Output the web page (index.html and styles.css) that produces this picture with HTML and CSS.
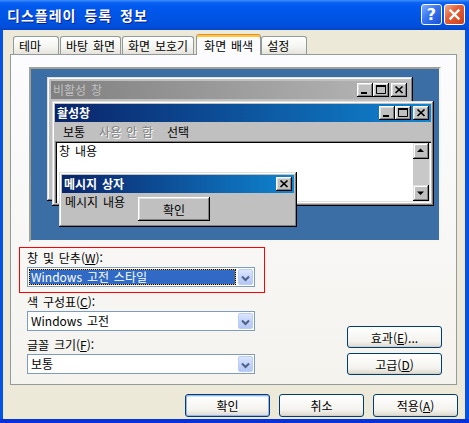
FILE: index.html
```html
<!DOCTYPE html>
<html lang="ko">
<head>
    <meta charset="UTF-8">
    <title>디스플레이 등록 정보</title>
    <link rel="stylesheet" href="styles.css">
</head>
<body>
    <div class="window">
        <div class="titlebar">
            <span class="title">디스플레이 등록 정보</span>
            <button class="cap help" type="button">?</button>
            <button class="cap close" type="button">
                <svg width="13" height="13" viewBox="0 0 13 13"><path d="M2.5 2.5l8 8M10.5 2.5l-8 8" stroke="#fff" stroke-width="2.4" stroke-linecap="square"/></svg>
            </button>
        </div>

        <div class="client">
            <ul class="tabs">
                <li class="tab">테마</li>
                <li class="tab">바탕 화면</li>
                <li class="tab">화면 보호기</li>
                <li class="tab selected">화면 배색</li>
                <li class="tab">설정</li>
            </ul>

            <div class="panel">
                <div class="preview">
                    <div class="desktop">
                        <!-- inactive window -->
                        <div class="cwin inactive">
                            <div class="ctitle">
                                <span class="ctitle-text">비활성 창</span>
                                <span class="cbtn"><svg width="16" height="14" viewBox="0 0 16 14"><rect x="4" y="9" width="6" height="2"/></svg></span>
                                <span class="cbtn"><svg width="16" height="14" viewBox="0 0 16 14"><path d="M3.5 2.5h9v8h-9z" fill="none" stroke="#000"/><rect x="3" y="2" width="10" height="2"/></svg></span>
                                <span class="cbtn gap"><svg width="16" height="14" viewBox="0 0 16 14"><path d="M4.5 3.5l7 6.5M11.5 3.5l-7 6.5" stroke="#000" stroke-width="1.7"/></svg></span>
                            </div>
                        </div>

                        <!-- active window -->
                        <div class="cwin active">
                            <div class="ctitle">
                                <span class="ctitle-text">활성창</span>
                                <span class="cbtn"><svg width="16" height="14" viewBox="0 0 16 14"><rect x="4" y="9" width="6" height="2"/></svg></span>
                                <span class="cbtn"><svg width="16" height="14" viewBox="0 0 16 14"><path d="M3.5 2.5h9v8h-9z" fill="none" stroke="#000"/><rect x="3" y="2" width="10" height="2"/></svg></span>
                                <span class="cbtn gap"><svg width="16" height="14" viewBox="0 0 16 14"><path d="M4.5 3.5l7 6.5M11.5 3.5l-7 6.5" stroke="#000" stroke-width="1.7"/></svg></span>
                            </div>
                            <div class="cmenu">
                                <span>보통</span>
                                <span class="disabled">사용 안 함</span>
                                <span>선택</span>
                            </div>
                            <div class="ctext">
                                <div class="ctext-body">창 내용</div>
                                <div class="scrollbar">
                                    <span class="sbtn"><svg width="16" height="16" viewBox="0 0 16 16"><path d="M4 9h7L7.5 5.5z"/></svg></span>
                                    <span class="track"></span>
                                    <span class="sbtn"><svg width="16" height="16" viewBox="0 0 16 16"><path d="M4 6.5h7L7.5 10z"/></svg></span>
                                </div>
                            </div>
                        </div>

                        <!-- message box -->
                        <div class="cwin msgbox">
                            <div class="ctitle">
                                <span class="ctitle-text">메시지 상자</span>
                                <span class="cbtn"><svg width="16" height="14" viewBox="0 0 16 14"><path d="M4.5 3.5l7 6.5M11.5 3.5l-7 6.5" stroke="#000" stroke-width="1.7"/></svg></span>
                            </div>
                            <div class="msg-body">
                                <span class="msg-text">메시지 내용</span>
                                <span class="classic-btn">확인</span>
                            </div>
                        </div>
                    </div>
                </div>

                <div class="options">
                    <div class="fields">
                        <div class="field focused">
                            <label>창 및 단추(<u>W</u>):</label>
                            <div class="combo">
                                <span class="combo-value selected-value">Windows 고전 스타일</span>
                                <span class="combo-arrow"><svg width="15" height="16" viewBox="0 0 15 16"><path d="M4 6.5l3.5 3.5L11 6.5" fill="none" stroke="#4D6185" stroke-width="2"/></svg></span>
                            </div>
                        </div>
                        <div class="field">
                            <label>색 구성표(<u>C</u>):</label>
                            <div class="combo">
                                <span class="combo-value">Windows 고전</span>
                                <span class="combo-arrow"><svg width="15" height="16" viewBox="0 0 15 16"><path d="M4 6.5l3.5 3.5L11 6.5" fill="none" stroke="#4D6185" stroke-width="2"/></svg></span>
                            </div>
                        </div>
                        <div class="field last">
                            <label>글꼴 크기(<u>F</u>):</label>
                            <div class="combo">
                                <span class="combo-value">보통</span>
                                <span class="combo-arrow"><svg width="15" height="16" viewBox="0 0 15 16"><path d="M4 6.5l3.5 3.5L11 6.5" fill="none" stroke="#4D6185" stroke-width="2"/></svg></span>
                            </div>
                        </div>
                    </div>
                    <div class="side-buttons">
                        <button class="btn side" type="button">효과(<u>E</u>)...</button>
                        <button class="btn side" type="button">고급(<u>D</u>)</button>
                    </div>
                </div>
            </div>

            <div class="dialog-buttons">
                <button class="btn default" type="button">확인</button>
                <button class="btn" type="button">취소</button>
                <button class="btn" type="button">적용(<u>A</u>)</button>
            </div>
        </div>
    </div>
</body>
</html>
```

FILE: styles.css
```css
* {
    box-sizing: border-box;
}
body {
    margin: 0;
    font-family: "Noto Sans CJK KR", "Noto Sans", sans-serif;
    font-size: 12px;
    word-spacing: 1.5px;
    color: #000;
}
button {
    font-family: inherit;
    font-size: 12px;
    word-spacing: inherit;
    color: #000;
    cursor: pointer;
}

/* XP frame */
.window {
    width: 469px;
    height: 423px;
    display: flex;
    flex-direction: column;
    background: #0553E5;
    border-bottom: 4px solid #0831D9;
}
.titlebar {
    height: 30px;
    flex: none;
    display: flex;
    align-items: center;
    padding: 0 4px 1px 7px;
    background: linear-gradient(#3D8DFA 0%, #0A62F3 9%, #0058EE 22%, #0054E3 60%, #0150DC 86%, #0344C8 100%);
}
.title {
    flex: 1;
    color: #fff;
    font-weight: bold;
    font-size: 14px;
    letter-spacing: 1px;
    word-spacing: 3px;
    text-shadow: 1px 1px #0A1E8C;
}
.cap {
    width: 21px;
    height: 21px;
    margin-left: 2px;
    padding: 0;
    border: 1px solid #fff;
    border-radius: 3px;
    display: flex;
    align-items: center;
    justify-content: center;
}
.cap.help {
    background: linear-gradient(135deg, #7DADFF 0%, #3A74EE 45%, #1753DA 100%);
    color: #fff;
    font-family: "DejaVu Sans", sans-serif;
    font-weight: bold;
    font-size: 16px;
    line-height: 1;
}
.cap.close {
    background: linear-gradient(135deg, #F4A98C 0%, #E5603A 40%, #CC3F18 100%);
}

.client {
    flex: 1;
    margin: 0 4px 0 3px;
    background: #ECE9D8;
    display: flex;
    flex-direction: column;
}

/* tabs */
.tabs {
    display: flex;
    align-items: flex-end;
    height: 20px;
    margin: 4px 0 0;
    padding: 0 0 0 10px;
    list-style: none;
    position: relative;
    z-index: 1;
}
.tab {
    height: 18px;
    min-width: 46px;
    padding: 0 5px;
    margin-right: 1px;
    line-height: 17px;
    white-space: nowrap;
    border: 1px solid #919B9C;
    border-bottom: none;
    border-radius: 3px 3px 0 0;
    background: linear-gradient(#FFFFFF, #F4F4F0 60%, #E4E2DA);
}
.tab.selected {
    height: 21px;
    margin: 0 0 -1px 1px;
    padding: 2px 7px 0;
    border-top-color: #E68B2C;
    background: #FCFCFE;
    box-shadow: inset 0 2px #FFC83C;
}

.panel {
    height: 331px;
    margin: 0 8px 0 7px;
    padding: 12px 0 0 0;
    border: 1px solid #919B9C;
    background: linear-gradient(#FCFCFE, #F4F3EE);
}

/* preview */
.preview {
    width: 412px;
    height: 175px;
    margin-left: 18px;
    border: 2px solid;
    border-color: #A09F98 #F6F5F0 #F6F5F0 #A09F98;
    background: #DCDAD0;
    padding: 0;
}
.desktop {
    position: relative;
    height: 100%;
    background: #3A6EA5;
    overflow: hidden;
}
.cwin {
    position: absolute;
    display: flex;
    flex-direction: column;
    padding: 3px;
    background: #C0C0C0;
    box-shadow: inset -1px -1px #000, inset 1px 1px #DFDFDF, inset -2px -2px #808080, inset 2px 2px #fff;
}
.cwin.inactive {
    left: 16px;
    top: 8px;
    width: 366px;
    height: 124px;
    padding: 4px;
}
.cwin.active {
    left: 21px;
    top: 32px;
    width: 382px;
    height: 105px;
}
.cwin.msgbox {
    left: 28px;
    top: 103px;
    width: 238px;
    height: 55px;
}
.ctitle {
    height: 18px;
    flex: none;
    display: flex;
    align-items: center;
    padding: 0 2px;
    background: linear-gradient(to right, #0A246A, #1084D0);
    color: #fff;
    font-weight: bold;
}
.inactive .ctitle {
    background: linear-gradient(to right, #808080, #B8B8B8);
    color: #C0C0C0;
    font-weight: normal;
}
.ctitle-text {
    flex: 1;
    line-height: 18px;
}
.cbtn {
    width: 16px;
    height: 14px;
    display: block;
    background: #C0C0C0;
    box-shadow: inset -1px -1px #000, inset 1px 1px #fff, inset -2px -2px #808080, inset 2px 2px #DFDFDF;
}
.cbtn svg {
    display: block;
}
.cbtn.gap {
    margin-left: 2px;
}
.cmenu {
    height: 19px;
    flex: none;
    display: flex;
    align-items: center;
    padding-left: 1px;
}
.cmenu span {
    padding: 0 7px;
}
.cmenu .disabled {
    color: #808080;
    text-shadow: 1px 1px #fff;
}
.ctext {
    flex: 1;
    display: flex;
    padding: 2px;
    background: #fff;
    box-shadow: inset 1px 1px #808080, inset 2px 2px #000, inset -1px -1px #fff, inset -2px -2px #DFDFDF;
}
.ctext-body {
    flex: 1;
    padding: 1px 2px;
    line-height: 14px;
}
.scrollbar {
    width: 16px;
    display: flex;
    flex-direction: column;
    background: #C8C8C8;
}
.sbtn {
    width: 16px;
    height: 16px;
    background: #C0C0C0;
    box-shadow: inset -1px -1px #000, inset 1px 1px #DFDFDF, inset -2px -2px #808080, inset 2px 2px #fff;
}
.sbtn svg {
    display: block;
}
.scrollbar .track {
    flex: 1;
}
.msg-body {
    flex: 1;
    display: flex;
    align-items: flex-start;
}
.msg-text {
    padding: 2px 0 0 3px;
    line-height: 14px;
}
.classic-btn {
    width: 72px;
    height: 24px;
    margin: 4px 0 0 13px;
    display: flex;
    align-items: center;
    justify-content: center;
    background: #C0C0C0;
    box-shadow: inset -1px -1px #000, inset 1px 1px #fff, inset -2px -2px #808080, inset 2px 2px #DFDFDF;
}

/* options */
.options {
    display: flex;
    align-items: flex-end;
    margin-top: 5px;
    padding-left: 8px;
}
.fields {
    width: 246px;
}
.field {
    padding: 0 0 0 8px;
    margin-top: 1px;
}
.field.last {
    margin-top: 6px;
}
.field.focused {
    margin-top: 0;
    padding: 2px 9px 5px 7px;
    border: 1px solid #FF0000;
}
.field label {
    display: block;
    height: 15px;
    line-height: 15px;
    margin-bottom: 2px;
}
.combo {
    width: 228px;
    height: 20px;
    display: flex;
    padding: 1px;
    border: 1px solid #7F9DB9;
    background: #fff;
}
.combo-value {
    flex: 1;
    padding-left: 2px;
    line-height: 16px;
}
.combo-value.selected-value {
    margin-right: 2px;
    padding-left: 1px;
    color: #fff;
    border: 1px dotted #000;
    background: linear-gradient(#316AC5, #316AC5) padding-box, #F0C050 border-box;
    line-height: 14px;
}
.combo-arrow {
    width: 15px;
    display: block;
    border: 1px solid #BACEF7;
    border-radius: 2px;
    background: linear-gradient(#DCE6FD, #C3D3FB 50%, #B4C7F5);
}
.combo-arrow svg {
    display: block;
    margin: 0 -1px;
}

.side-buttons {
    display: flex;
    flex-direction: column;
    gap: 5px;
    margin: 0 0 -1px auto;
    padding-right: 14px;
}

/* XP buttons */
.btn {
    height: 23px;
    width: 85px;
    padding: 0;
    border: 1px solid #003C74;
    border-radius: 3px;
    background: linear-gradient(#FFFFFF, #F4F3EE 70%, #DCD8CE);
    box-shadow: inset 0 -1px #D6D0C5;
}
.btn.side {
    width: 95px;
    height: 22px;
}
.btn.default {
    box-shadow: inset 0 0 0 1px #98B4EE, inset 0 1px 0 1px #CEE7FF;
}
.dialog-buttons {
    display: flex;
    justify-content: flex-end;
    gap: 9px;
    margin-top: 9px;
    padding-right: 7px;
}
```
